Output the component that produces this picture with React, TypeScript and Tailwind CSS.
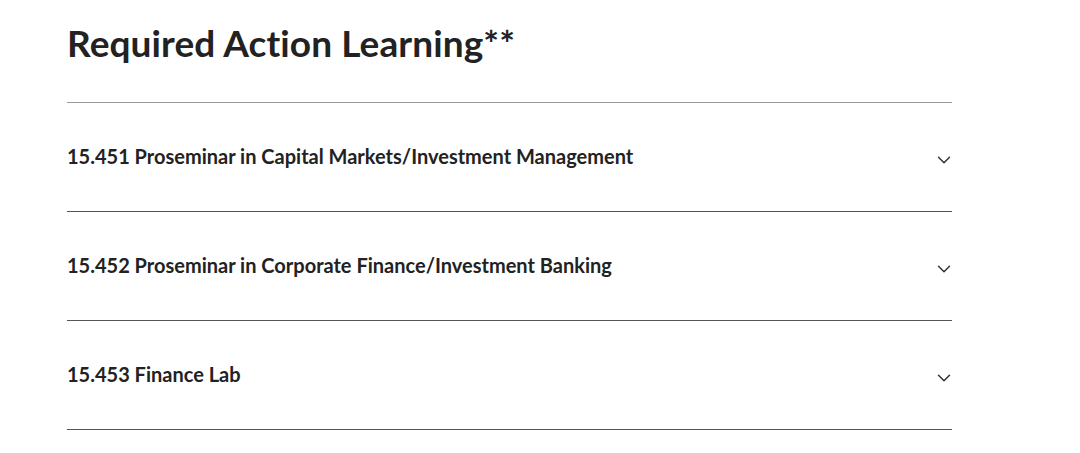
import { ChevronDown } from "lucide-react";

const courses = [
  "15.451 Proseminar in Capital Markets/Investment Management",
  "15.452 Proseminar in Corporate Finance/Investment Banking",
  "15.453 Finance Lab",
];

export default function App() {
  return (
    <div className="min-h-screen bg-white font-['Lato','Liberation_Sans',sans-serif] text-[#222]">
      <div className="pl-[67px] w-[952px]">
        {/* Heading */}
        <h1 className="pt-[20px] h-[102px] text-[37px] leading-[46px] font-bold tracking-[0.1px]">
          Required Action Learning**
        </h1>

        {/* Accordion */}
        <div className="border-t border-[#999]">
          {courses.map((c) => (
            <button
              key={c}
              className="w-full h-[109px] flex items-center justify-between border-b border-[#555] text-left"
            >
              <span className="text-[20px] font-bold -mt-[2px]">{c}</span>
              <ChevronDown size={22} strokeWidth={1.6} className="text-[#333] mr-[-3px] mt-[6px]" />
            </button>
          ))}
        </div>
      </div>
    </div>
  );
}
